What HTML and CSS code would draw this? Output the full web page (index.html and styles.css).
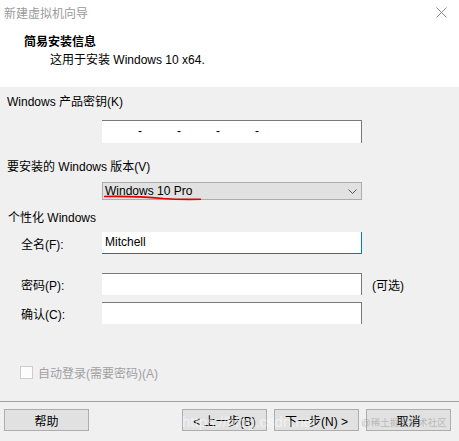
FILE: index.html
```html
<!doctype html>
<html lang="zh-CN">
<head>
  <meta charset="UTF-8">
  <meta name="viewport" content="width=device-width, initial-scale=1.0">
  <title>新建虚拟机向导</title>
  <link rel="stylesheet" href="styles.css">
</head>
<body>

  <div class="wizard">
    <header class="header">
      <div class="titlebar">
        <span class="title">新建虚拟机向导</span>
        <svg class="close" width="11" height="11" viewBox="0 0 11 11">
          <path d="M0.5 0.5 L10.5 10.5 M10.5 0.5 L0.5 10.5" stroke="#8a8a8a" stroke-width="1" fill="none"/>
        </svg>
      </div>
      <div class="heading">简易安装信息</div>
      <div class="subheading">这用于安装 Windows 10 x64.</div>
    </header>

    <section class="content">
      <div class="label-row first">Windows 产品密钥(K)</div>
      <div class="key-row">
        <div class="textbox key">
          <span>-</span><span>-</span><span>-</span><span>-</span>
        </div>
      </div>

      <div class="label-row second">要安装的 Windows 版本(V)</div>
      <div class="select-row">
        <div class="select">
          <span>Windows 10 Pro</span>
          <svg class="chevron" width="9" height="5" viewBox="0 0 9 5">
            <path d="M0.5 0.5 L4.5 4.5 L8.5 0.5" stroke="#555" stroke-width="1" fill="none"/>
          </svg>
          <svg class="scribble" width="100" height="6" viewBox="0 0 100 6">
            <path d="M1 1.5 C30 1, 45 2, 60 3.5 C75 4.5, 85 4.5, 98 4.2" stroke="#e00000" stroke-width="1.6" fill="none"/>
          </svg>
        </div>
      </div>

      <div class="label-row third">个性化 Windows</div>
      <div class="field-row name-row">
        <label class="field-label">全名(F):</label>
        <div class="textbox focused">Mitchell</div>
      </div>
      <div class="field-row pass-row">
        <label class="field-label">密码(P):</label>
        <div class="textbox"></div>
        <span class="optional">(可选)</span>
      </div>
      <div class="field-row confirm-row">
        <label class="field-label">确认(C):</label>
        <div class="textbox"></div>
      </div>

      <div class="check-row">
        <span class="checkbox"></span>
        <span class="check-text">自动登录(需要密码)(A)</span>
      </div>
    </section>

    <footer class="footer">
      <button class="btn">帮助</button>
      <div class="btn-group">
        <button class="btn">&lt; 上一步(B)</button>
        <button class="btn">下一步(N) &gt;</button>
        <button class="btn cancel">取消</button>
      </div>
      <span class="watermark url">https://blog.csdn.net</span>
      <span class="watermark site">@稀土掘金技术社区</span>
    </footer>
  </div>

</body>
</html>
```

FILE: styles.css
```css
    body {
      margin: 0;
      font-family: "Liberation Sans", "Noto Sans CJK SC", sans-serif;
      font-size: 12px;
      color: #000;
      background-color: #f0f0f0;
    }

    .wizard {
      width: 459px;
      height: 441px;
      overflow: hidden;
      background-color: #f0f0f0;
    }

    /* Header */
    .header {
      height: 87px;
      background-color: white;
    }

    .titlebar {
      display: flex;
      justify-content: space-between;
      align-items: center;
      height: 24px;
      padding: 0 12px 0 4px;
    }

    .title {
      color: #9a9a9a;
    }

    .heading {
      margin-top: 10px;
      margin-left: 24px;
      height: 16px;
      line-height: 16px;
      font-weight: bold;
      font-size: 12px;
    }

    .subheading {
      margin-left: 50px;
      margin-top: 1px;
      height: 18px;
      line-height: 18px;
    }

    /* Content */
    .content {
      padding-left: 7px;
    }

    .label-row {
      height: 18px;
      line-height: 18px;
    }

    .label-row.first {
      margin-top: 6px;
    }

    .label-row.second {
      margin-top: 15px;
    }

    .label-row.third {
      margin-top: 9px;
      padding-left: 1px;
    }

    .key-row {
      margin-top: 9px;
      padding-left: 95px;
    }

    .textbox {
      box-sizing: border-box;
      width: 260px;
      height: 22px;
      line-height: 20px;
      padding-left: 3px;
      background-color: white;
      border-top: 1px solid #7a7a7a;
      border-right: 1px solid #7a7a7a;
    }

    .textbox.key {
      display: flex;
      height: 23px;
      padding-left: 36px;
    }

    .textbox.key span {
      width: 39px;
    }

    .textbox.focused {
      border-top: none;
      border-right: 1px solid #0078d7;
      border-bottom: 1px solid #0078d7;
      line-height: 21px;
    }

    .select-row {
      margin-top: 6px;
      padding-left: 95px;
    }

    .select {
      position: relative;
      display: flex;
      justify-content: space-between;
      align-items: center;
      box-sizing: border-box;
      width: 260px;
      height: 18px;
      padding: 0 4px 0 2px;
      background-color: #e1e1e1;
      border: 1px solid #adadad;
    }

    .scribble {
      position: absolute;
      left: 0;
      top: 12px;
    }

    .field-row {
      display: flex;
      align-items: center;
      height: 22px;
      padding-left: 14px;
    }

    .field-label {
      width: 81px;
    }

    .name-row {
      margin-top: 5px;
    }

    .pass-row {
      margin-top: 19px;
    }

    .confirm-row {
      margin-top: 7px;
    }

    .optional {
      margin-left: 10px;
    }

    .check-row {
      display: flex;
      align-items: center;
      margin-top: 42px;
      padding-left: 13px;
      height: 13px;
    }

    .checkbox {
      box-sizing: border-box;
      width: 13px;
      height: 13px;
      border: 1px solid #cccccc;
      background-color: #fcfcfc;
    }

    .check-text {
      margin-left: 5px;
      color: #a0a0a0;
    }

    /* Footer */
    .footer {
      position: relative;
      display: flex;
      justify-content: space-between;
      margin-top: 22px;
      padding: 7px 8px 0 4px;
      border-top: 1px solid #a0a0a0;
    }

    .btn-group {
      display: flex;
      gap: 7px;
    }

    .btn {
      box-sizing: border-box;
      width: 85px;
      height: 22px;
      padding: 0;
      font-family: inherit;
      font-size: 12px;
      color: #000;
      background-color: #e1e1e1;
      border: 1px solid #adadad;
    }

    .watermark {
      position: absolute;
      white-space: nowrap;
      pointer-events: none;
    }

    .watermark.url {
      left: 182px;
      top: 11px;
      font-size: 15px;
      color: rgba(255, 255, 255, 0.55);
    }

    .watermark.site {
      left: 361px;
      top: 13px;
      font-size: 9.5px;
      color: rgba(140, 140, 140, 0.5);
    }
```
